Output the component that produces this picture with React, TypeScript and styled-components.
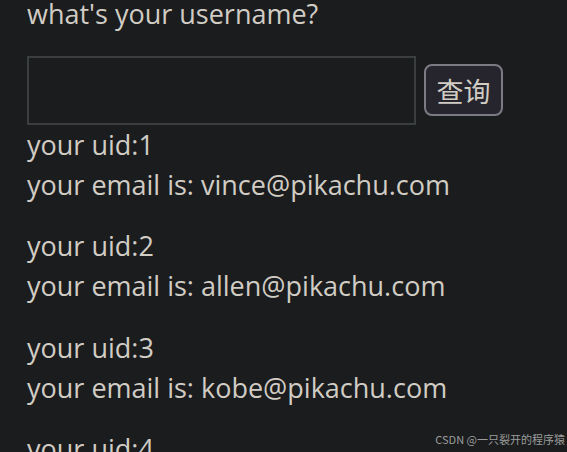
import React from "react";
import styled, { createGlobalStyle } from "styled-components";

const Global = createGlobalStyle`
  html, body { margin: 0; padding: 0; background: #1b1c1e; }
  body { font-family: "Open Sans", "Noto Sans CJK SC", sans-serif; color: #d1ccc4; }
`;

const Page = styled.div`
  height: 452px;
  overflow: hidden;
  padding-left: 27px;
  position: relative;
`;

const Title = styled.p`
  margin: -6.5px 0 0;
  font-size: 27px;
  line-height: 40px;
`;

const Form = styled.form`
  display: flex;
  align-items: center;
  gap: 8px;
  margin-top: 22px;
`;

const Input = styled.input`
  box-sizing: border-box;
  width: 389px;
  height: 69px;
  margin: 0;
  background: #1b1c1e;
  border: 2px solid #3a3e3f;
  outline: none;
  color: #d1ccc4;
  font-size: 24px;
`;

const Button = styled.button`
  box-sizing: border-box;
  width: 79px;
  height: 52px;
  padding: 0;
  border: 2px solid #7c7a84;
  border-radius: 8px;
  background: #26252d;
  color: #d1ccc4;
  font-family: "Noto Sans CJK SC", sans-serif;
  font-size: 27px;
  line-height: 1;
`;

const Notice = styled.p`
  margin: 0 0 21.5px;
  font-size: 27px;
  line-height: 40px;
`;

const Watermark = styled.div`
  position: absolute;
  right: 2px;
  bottom: 5px;
  font-family: "Noto Sans CJK SC", sans-serif;
  font-size: 11px;
  color: #9c9c9c;
`;

const users = [
  { uid: 1, email: "vince@pikachu.com" },
  { uid: 2, email: "allen@pikachu.com" },
  { uid: 3, email: "kobe@pikachu.com" },
  { uid: 4, email: "grady@pikachu.com" },
];

export default function App() {
  return (
    <Page>
      <Global />
      <Title>what's your username?</Title>
      <Form onSubmit={(e) => e.preventDefault()}>
        <Input type="text" />
        <Button type="submit">查询</Button>
      </Form>
      {users.map((u) => (
        <Notice key={u.uid}>
          your uid:{u.uid}
          <br />
          your email is: {u.email}
        </Notice>
      ))}
      <Watermark>CSDN @一只裂开的程序猿</Watermark>
    </Page>
  );
}
